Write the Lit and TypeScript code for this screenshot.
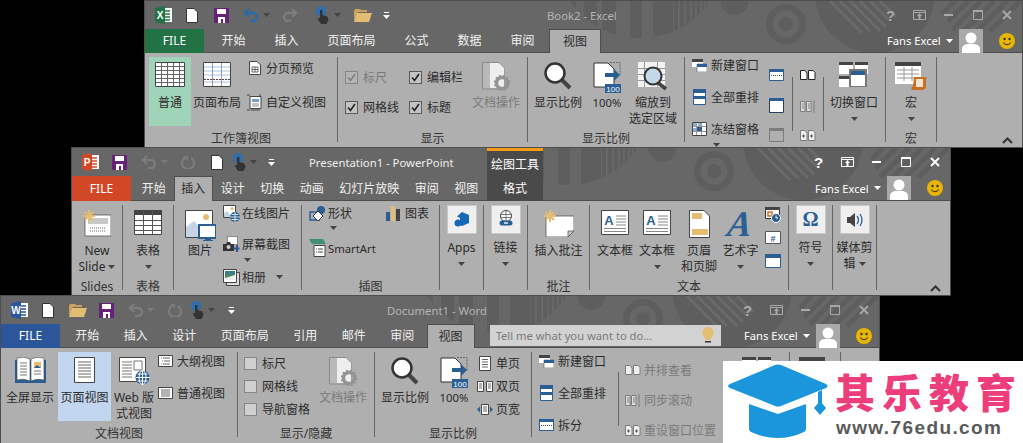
import { LitElement, html, svg, css, TemplateResult } from 'lit';
import { customElement } from 'lit/decorators.js';

type T = TemplateResult | unknown;
type Item = { x: number; w: number; t: T; cls?: string };

const ic = (w: number, h: number, body: T) =>
  html`<svg class="ic" width=${w} height=${h} viewBox="0 0 ${w} ${h}">${body}</svg>`;

// lay items out left to right; the gaps come from the x values in the data
const flow = (x0: number, items: Item[]) => {
  let p = x0;
  return items.map((it) => {
    const ml = it.x - p;
    p = it.x + it.w;
    return html`<div class="slot ${it.cls || ''}" style="margin-left:${ml}px;width:${it.w}px">${it.t}</div>`;
  });
};

const BLUE = '#2b5f94';
const TAN = '#e3bd72';
const DK = '#444';

/* quick access toolbar */
const logo = (bg: string, letter: string) => ic(18, 18, svg`
  <path d="M8 2h9v14H8z" fill="#fff"/>
  <path d="M10 5h5M10 8h5M10 11h5M10 14h5" stroke=${bg} stroke-width="1.4"/>
  <path d="M0 2l10-2v18L0 16z" fill=${bg}/>
  <text x="5" y="13" text-anchor="middle" font-family="Liberation Sans" font-weight="700" font-size="10" fill="#fff">${letter}</text>`);
const qDoc = ic(12, 15, svg`<path d="M.5.5H8L11.5 4v10.5H.5z" fill="#fff" stroke="#333"/>`);
const qSave = ic(15, 15, svg`<path d="M0 0h15v15H0z" fill="#68217a"/><path d="M3 1h9v5H3zM4 9h7v6H9v-4H7v4H4z" fill="#fff"/>`);
const arrow = (c: string, flip: boolean) => ic(16, 14, svg`
  <g transform=${flip ? 'translate(16 0) scale(-1 1)' : ''} fill="none" stroke=${c} stroke-width="2.4">
    <path d="M6 1L2 5l4 4"/><path d="M2 5h8a4 4 0 0 1 0 8H7"/></g>`);
const qRefresh = ic(14, 14, svg`<path d="M4 3a6 6 0 1 0 6 0" fill="none" stroke="#7c7c7c" stroke-width="2.2"/><path d="M2 1h5v5z" fill="#7c7c7c"/>`);
const qTouch = ic(13, 18, svg`
  <circle cx="5" cy="5" r="5" fill="#2f6fb0"/>
  <path d="M4 4h2.400v5l5 1.500L12.500 14l-2 4H5L1.500 12.500 4 12z" fill="#333"/>`);
const qFolder = ic(18, 14, svg`<path d="M0 3l1-2h5l1 1h6v2H4L0 13z" fill="#c9a35e"/><path d="M0 14l3-9h15l-3 9z" fill=${TAN}/>`);
const qMore = ic(7, 8, svg`<path d="M1 1h5v1H1z" fill="#fff"/><path d="M0 4h7L3.500 8z" fill="#fff"/>`);
const caret = (c = '#444') => html`<svg class="ic" width="7" height="4" viewBox="0 0 7 4"><path d="M0 0h7L3.500 4z" fill=${c}/></svg>`;

/* window controls */
const ctlOpts = (c: string) => ic(13, 10, svg`<path d="M.5.5h12v9H.5zM.5 2.500h12" fill="none" stroke=${c}/><path d="M6.500 3l2.500 3H7.500v3h-2V6H4z" fill=${c}/>`);
const ctlMin = (c: string) => ic(9, 2, svg`<path d="M0 0h9v2H0z" fill=${c}/>`);
const ctlMax = (c: string) => ic(10, 10, svg`<path d="M.5.5h9v9h-9z" fill="none" stroke=${c}/><path d="M0 0h10v2H0z" fill=${c}/>`);
const ctlX = (c: string) => ic(10, 10, svg`<path d="M1 1l8 8M9 1l-8 8" stroke=${c} stroke-width="2"/>`);

const avatar = ic(24, 24, svg`<path d="M0 0h24v24H0z" fill="#a9a9a9"/><circle cx="12" cy="9" r="5.500" fill="#fff"/><path d="M3 24v-4q0-4 5-5h8q5 1 5 5v4z" fill="#fff"/>`);
const smiley = ic(16, 16, svg`<circle cx="8" cy="8" r="8" fill="#e8b600"/><circle cx="5.500" cy="6" r="1.200" fill="#333"/><circle cx="10.500" cy="6" r="1.200" fill="#333"/><path d="M4 9.500q4 4.500 8 0" fill="none" stroke="#333"/>`);

/* ribbon icons */
const gridLines = (xs: number[], ys: number[], w: number, h: number, c: string) => svg`
  ${xs.map((x) => svg`<path d="M${x} 0V${h}" stroke=${c}/>`)}
  ${ys.map((y) => svg`<path d="M0 ${y}H${w}" stroke=${c}/>`)}`;
const iNormal = ic(30, 25, svg`
  <path d="M0 0h30v25H0z" fill="#fff"/>
  ${gridLines([6.5, 12.5, 18.5, 24.5], [4.5, 8.5, 12.5, 16.5, 20.5], 30, 25, '#666')}
  <path d="M.5.5h29v24H.5z" fill="none" stroke=${DK}/>`);
const iLayout = ic(28, 25, svg`
  <path d="M0 0h28v25H0z" fill="#fff"/>
  <path d="M1 5h26M1 9h26M1 13h26M1 20h26" stroke="#c6d8ee" stroke-width="1.400"/>
  <path d="M9.500 1v23M18.500 1v23" stroke="#99a" />
  <path d="M1 17.500h26" stroke="#444" stroke-dasharray="2 1"/>
  <path d="M.5.5h27v24H.5z" fill="none" stroke=${DK}/>`);
const iBreak = ic(12, 14, svg`<path d="M.5.500H8L11.500 4v9.500H.5z" fill="#fff" stroke="#444"/><path d="M3 6h6v5H3zM6 6v5M3 8.500h6" fill="none" stroke="#666"/>`);
const iCustom = ic(16, 17, svg`<path d="M3 2.500h11v12H3z" fill="#fff" stroke="#444"/><path d="M0 1h3M0 16h3M13 0v2M4 16h9" stroke="#444"/><path d="M5 5h7v3H5z" fill="#7aa0c8"/><path d="M5 10h7M5 12h7" stroke="#888"/>`);
const iDocOp = ic(28, 29, svg`
  <path d="M.5.500H17L22 6v21H.5z" fill="#b9b9b9" stroke="#8a8a8a"/><path d="M8 1h9l5 5v20H8z" fill="#eee"/>
  <circle cx="20" cy="21" r="5.500" fill="none" stroke="#949494" stroke-width="3.500"/><circle cx="20" cy="21" r="7.500" fill="none" stroke="#949494" stroke-width="1.500" stroke-dasharray="2 2"/>`);
const iMag = ic(28, 28, svg`<path d="M17 17l9 9" stroke="#444" stroke-width="4"/><circle cx="11" cy="11" r="9.500" fill="#fff" stroke="#333" stroke-width="2.500"/>`);
const i100 = ic(28, 31, svg`
  <path d="M1 1h14l6 6v18H1z" fill="#fff" stroke="#333"/>
  <path d="M17 .5h10v14" fill="none" stroke="#666" stroke-dasharray="2 1"/>
  <path d="M12 11h9V7l6 6-6 6v-4h-9z" fill=${BLUE}/>
  <path d="M12 22h16v9H12z" fill=${BLUE}/>
  <text x="20" y="30" text-anchor="middle" font-family="Liberation Sans" font-size="8" fill="#fff">100</text>`);
const iZoomSel = ic(30, 29, svg`
  <path d="M0 0h27v25H0z" fill="#f2f2f2"/>
  ${gridLines([6.5, 19.5], [6.5, 12.5, 18.5], 27, 25, '#999')}
  <path d="M19 20l9 7" stroke="#444" stroke-width="3.500"/>
  <circle cx="15" cy="14" r="8.500" fill="#c4d8ec" stroke="#333" stroke-width="2"/>`);
const iNewWin = ic(15, 13, svg`<path d="M0 2h11v6H0z" fill="#fff"/><path d="M0 0h11v3H0z" fill=${DK}/><path d="M5 5h10v8H5z" fill="#fff" stroke="#444" stroke-width=".5"/><path d="M5 5h10v3H5z" fill=${BLUE}/>`);
const iArrange = ic(13, 16, svg`<path d="M.5.500h12v15H.5z" fill="#fff" stroke=${BLUE}/><path d="M0 0h13v4H0zM0 7h13v3H0z" fill=${BLUE}/>`);
const iFreeze = ic(15, 14, svg`<path d="M0 0h15v14H0z" fill="#fff"/>${gridLines([4.5, 9.5], [4.5, 9.5], 15, 14, '#999')}<path d="M.5.500h14v13H.5z" fill="none" stroke=${DK}/><path d="M5 5h5v4H5z" fill=${BLUE}/><path d="M1 1h3v3H1zM6 1h3v3H6zM1 6h3v3H1z" fill="#8fb0d4"/>`);
const iSplit = ic(15, 12, svg`<path d="M.5.500h14v11H.5z" fill="#fff" stroke=${BLUE}/><path d="M0 0h15v3H0z" fill=${BLUE}/><path d="M2 6.500h11" stroke="#444" stroke-dasharray="1 1"/>`);
const iHide = ic(15, 15, svg`<path d="M.5.500h14v14H.5z" fill="#fff" stroke=${BLUE}/><path d="M0 0h15v3H0z" fill=${BLUE}/><path d="M.5 14.500h14M.5 3v12M14.500 3v12" stroke="#222" stroke-dasharray="1 1"/>`);
const iUnhide = ic(15, 14, svg`<path d="M.5.500h14v13H.5z" fill="none" stroke="#7c7c7c"/><path d="M0 0h15v3H0z" fill="#7c7c7c"/>`);
const iPages = ic(16, 10, svg`<path d="M.5.500H5L7 3v6.500H.5zM8.500.500H13l2 2v7H8.500z" fill="#fff" stroke="#222"/>`);
const iPagesDim = ic(16, 10, svg`<path d="M.5.500H5L7 3v6.500H.5zM8.500.500H13l2 2v7H8.500z" fill="#eee" stroke="#7c7c7c"/>`);
const iSync = ic(16, 15, svg`<path d="M.5 2.500H5v10H.5zM6.500 2.500H11v10H6.500z" fill="#ddd" stroke="#7c7c7c"/><path d="M2 5h2M2 7h2M2 9h2M8 5h2M8 7h2M8 9h2" stroke="#7c7c7c"/><path d="M14 1v13" stroke="#7c7c7c"/>`);
const iReset = ic(16, 11, svg`<path d="M.5.500H5L7 3v7.500H.5zM8.500.500H13l2 2v8H8.500z" fill="#eee" stroke="#7c7c7c"/><path d="M2 6h3M3.500 4.500v3M10 6h3M11.500 4.500v3" stroke="#555"/>`);
const iSwitch = ic(30, 25, svg`
  <path d="M0 0h14v12H0zM16 0h13v12H16zM0 14h12v11H0z" fill="#fff"/>
  <path d="M0 0h14v3H0zM16 0h13v3H16zM0 14h12v3H0z" fill=${DK}/>
  <path d="M11 8h16v17H11z" fill="#fff" stroke="#777" stroke-width="2"/><path d="M12 9h14v4H12z" fill=${BLUE}/>`);
const iMacro = ic(32, 28, svg`
  <path d="M0 0h26v22H0z" fill="#fff"/><path d="M0 0h26v4H0z" fill=${DK}/>
  <path d="M2 8h22M2 12h22M2 16h22M9 5v14M17 5v14" stroke="#999"/>
  <path d="M19 15h13l-1 2v8q-1 3-3 3H16l1-2h-1l2-2z" fill="#c96f22"/><path d="M21 17h7v8h-7z" fill="#f4e3d0"/>`);

const iNewSlide = ic(28, 27, svg`
  <path d="M2 5h26v21H2z" fill="#fff" stroke="#555" stroke-width=".8"/>
  <path d="M5 8h20v6H5z" fill="#c8c8c8"/><path d="M7 18h16M7 21h16" stroke="#666" stroke-dasharray="1 1"/>
  <path d="M6 0v12M0 6h12M2 2l8 8M10 2l-8 8" stroke=${TAN} stroke-width="2"/>`);
const iTable = ic(28, 25, svg`
  <path d="M0 0h28v25H0z" fill="#fff"/><path d="M0 0h28v5H0z" fill=${DK}/>
  ${gridLines([9.5, 18.5], [10.5, 15.5, 20.5], 28, 25, '#555')}
  <path d="M.5.500h27v24H.5z" fill="none" stroke=${DK}/>`);
const iPicture = ic(31, 31, svg`
  <path d="M.5.500h27v27H.5z" fill="#fff" stroke="#444"/>
  <path d="M1 27V17l8-6 14 16z" fill="#c4d5e8"/><circle cx="21" cy="7" r="3" fill=${TAN}/>
  <path d="M14 15h17v13H14z" fill="#fff" stroke=${BLUE} stroke-width="2"/><path d="M20 29h6v1h2v1h-10v-1h2z" fill=${BLUE}/>`);
const iOnline = ic(17, 17, svg`<path d="M.5.500h12v12H.5z" fill="#fff" stroke="#444"/><path d="M1 12V8l3-2 5 6z" fill="#c4d5e8"/><circle cx="9" cy="3.500" r="1.500" fill=${TAN}/><circle cx="12" cy="12" r="5" fill=${BLUE}/><path d="M7 12h10M12 7v10M8.500 9.500h7M8.500 14.500h7" stroke="#fff" stroke-width=".8"/>`);
const iShot = ic(17, 16, svg`<path d="M4.500 .5h10v8h-10z" fill="#fff" stroke="#444" stroke-dasharray="1 1"/><path d="M0 8h3l1-2h3l1 2h3v7H0z" fill="#333"/><circle cx="5.500" cy="11" r="2" fill="#ccc"/><path d="M14 9v7M10.500 12.500h6" stroke=${BLUE} stroke-width="2.200"/>`);
const iAlbum = ic(17, 17, svg`<path d="M3.500 3.500h13v13h-13z" fill="#ddd" stroke="#444"/><path d="M.5.500h13v13H.5z" fill="#fff" stroke="#444"/><path d="M2 2h10v4H2z" fill="#3a7a90"/><path d="M2 6l4-2 6 3v4H2z" fill="#4a8a5a"/><path d="M2 9l10-3v5H2z" fill="#eee"/>`);
const iShape = ic(17, 16, svg`<path d="M1 7h9v8H1z" fill="none" stroke=${BLUE} stroke-width="1.500"/><circle cx="12" cy="5" r="4" fill=${BLUE}/><path d="M9 6l5 5-5 5-5-5z" fill="#fff" stroke="#333"/>`);
const iChart = ic(14, 15, svg`<path d="M0 6h4v9H0z" fill=${BLUE}/><path d="M5 0h4v15H5z" fill=${TAN}/><path d="M10 3h4v12h-4z" fill=${DK}/>`);
const iSmart = ic(17, 19, svg`<path d="M0 0h14l3 5H3z" fill="#3e8e78"/><path d="M5 6.500h11v11H5z" fill="#fff" stroke="#444"/><path d="M7 10h1M9 10h5M7 13h1M9 13h5" stroke="#444"/>`);
const iApps = ic(16, 16, svg`<path d="M8 0l7 3v8l-7 3-2-1V6L3 4.500z" fill="#1668b9"/><circle cx="4" cy="11" r="3.500" fill="#1668b9"/>`);
const iLink = ic(16, 19, svg`<circle cx="8" cy="6" r="5.500" fill="#fff" stroke="#444"/><path d="M3 4.500h10M3 7.500h10M8 .5v11" stroke="#444" stroke-width=".7"/><path d="M4 13h8" stroke=${BLUE} stroke-width="5" stroke-linecap="round"/><path d="M6 13h4" stroke="#eee" stroke-width="1.500"/>`);
const iComment = ic(30, 27, svg`
  <path d="M2 6h28v15l-6 6H2z" fill="#fff" stroke="#555" stroke-width=".8"/><path d="M24 27v-6h6z" fill="#c8c8c8" stroke="#555" stroke-width=".8"/>
  <path d="M6 0v12M0 6h12M2 2l8 8M10 2l-8 8" stroke=${TAN} stroke-width="2"/>`);
const iTextBox = ic(28, 25, svg`
  <path d="M.5.500h27v24H.5z" fill="#fff" stroke=${DK}/>
  <text x="8" y="15" text-anchor="middle" font-family="Liberation Sans" font-weight="700" font-size="13" fill=${BLUE}>A</text>
  <path d="M15 6h10M15 9h10M15 12h10M15 15h10M3 18.500h22M3 21.500h22" stroke="#888"/>`);
const iHeader = ic(21, 28, svg`<path d="M.5.500H15L20.500 6v21.500H.5z" fill="#fff" stroke=${DK}/><path d="M3 3h10v6H3z" fill=${TAN}/><path d="M3 19h16v6H3z" fill=${TAN}/>`);
const iWordArt = html`<span class="wordart">A</span>`;
const iDate = ic(16, 16, svg`<path d="M.5.500h14v11H.5z" fill="#fff" stroke="#333"/><path d="M0 0h15v3H0z" fill=${DK}/><path d="M3 5h4v4H3z" fill="none" stroke="#c96f22" stroke-width="1.500"/><circle cx="11" cy="11" r="4.500" fill=${BLUE} stroke="#fff" /><path d="M11 8.500V11h2" stroke="#fff" fill="none"/>`);
const iNumber = ic(16, 13, svg`<path d="M.5.500h15v12H.5z" fill="#fff" stroke="#555"/><text x="8" y="11" text-anchor="middle" font-family="Liberation Sans" font-weight="700" font-size="9" fill=${BLUE}>#</text>`);
const iObject = ic(16, 14, svg`<path d="M.5.500h15v13H.5z" fill="#fff" stroke=${BLUE}/><path d="M0 0h16v4H0z" fill=${BLUE}/>`);
const iOmega = html`<span class="omega">Ω</span>`;
const iSound = ic(16, 14, svg`<path d="M0 4h3l5-4v14l-5-4H0z" fill=${DK}/><path d="M10 3q3 4 0 8M13 1q4 6 0 12" fill="none" stroke=${BLUE} stroke-width="1.300"/>`);

const iBook = ic(31, 26, svg`
  <path d="M0 3h31v23H0z" fill=${BLUE}/>
  <path d="M2 1q7-2 13 1v22q-6-3-13-1zM29 1q-7-2-13 1v22q6-3 13-1z" fill="#fff" stroke="#444" stroke-width=".6"/>
  <path d="M5 6h7M5 9h7M5 12h7M5 15h7M5 18h7M19 14h7M19 17h7" stroke="#777"/>
  <path d="M19 5h7v6h-7z" fill=${TAN}/><path d="M19 11l3-3 4 3z" fill=${BLUE}/>`);
const iPageDoc = ic(21, 26, svg`<path d="M.5.500h20v25H.5z" fill="#fff" stroke=${DK}/><path d="M4 5h13M4 8h13M4 11h13M4 14h13M4 17h13M4 20h13" stroke="#666"/>`);
const iWeb = ic(31, 28, svg`
  <path d="M.5.500h26v24H.5z" fill="#fff" stroke=${DK}/>
  <path d="M3 5h10M3 8h10M3 11h10M3 14h10M3 17h10M3 20h10" stroke="#777"/><path d="M15 4h8v9h-8z" fill="#fff" stroke="#777"/>
  <circle cx="23.500" cy="20.500" r="7" fill=${BLUE}/><path d="M17 20.500h14M23.500 14v14M18.500 17h10M18.500 24h10" stroke="#fff"/><ellipse cx="23.500" cy="20.500" rx="3.500" ry="7" fill="none" stroke="#fff"/>`);
const iOutline = ic(15, 12, svg`<path d="M.5.500h14v11H.5z" fill="#fff" stroke=${DK}/><path d="M3 3h1M5 3h7M4 6h1M6 6h6M3 9h1M5 9h7" stroke="#666"/>`);
const iDraft = ic(15, 12, svg`<path d="M.5.500h14v11H.5z" fill="#fff" stroke=${DK}/><path d="M3 3h9M3 5h9M3 7h9M3 9h9" stroke="#666"/>`);
const iOnePage = ic(12, 15, svg`<path d="M.5.500h11v14H.5z" fill="#fff" stroke=${DK}/><path d="M3 3.500h6M3 6h6M3 8.500h6M3 11h6" stroke="#666"/>`);
const iTwoPage = ic(16, 11, svg`<path d="M.5.500h6v10h-6zM9.500.500h6v10h-6z" fill="#fff" stroke=${DK}/><path d="M2 3h3M2 5h3M2 7h3M11 3h3M11 5h3M11 7h3" stroke="#666"/>`);
const iPageW = ic(16, 11, svg`<path d="M4.500.500h7v10h-7z" fill="#fff" stroke=${DK}/><path d="M6 3h4M6 5h4M6 7h4" stroke="#666"/><path d="M0 5.500l3-3v6zM16 5.500l-3-3v6z" fill=${BLUE}/>`);

/* ribbon pieces */
const lbl = (s: string) => {
  const inline = s.endsWith('▾');
  return html`<div class="txt ${s === '100%' ? 'lat' : ''}">${inline ? s.slice(0, -1) : s}${inline ? html`<span class="icar">${caret()}</span>` : ''}</div>`;
};
const big = (i: T, lines: string[], o: { caret?: boolean; hl?: string; dis?: boolean } = {}) =>
  html`<div class="big ${o.hl || ''} ${o.dis ? 'dis' : ''}">
    <div class="iarea">${i}</div>
    ${lines.map(lbl)}
    ${o.caret ? html`<div class="car">${caret()}</div>` : ''}
  </div>`;
const boxed = (i: T, lines: string[], hasCaret = true) =>
  html`<div class="big">
    <div class="btnbox">${i}</div>
    ${lines.map(lbl)}
    ${hasCaret ? html`<div class="car">${caret()}</div>` : ''}
  </div>`;

type Row = { y: number; i?: T; t?: string; dis?: boolean; car?: number; after?: number };
const col = (top: number, iw: number, gap: number, rows: Row[]) => {
  let p = top;
  return html`<div class="col">
    ${rows.map((r) => {
      const mt = r.y - 8 - p;
      p = r.y + 8;
      return html`<div class="row ${r.dis ? 'dis' : ''}" style="margin-top:${mt}px">
        ${r.car !== undefined
          ? html`<span class="rcar" style="margin-left:${r.car}px">${caret()}</span>`
          : html`<span class="rico" style="width:${iw}px">${r.i}</span>`}
        ${r.t ? html`<span class="rtxt ${/^[A-Za-z]/.test(r.t) ? 'lat' : ''}" style="margin-left:${gap}px">${r.t}</span>` : ''}
        ${r.after !== undefined ? html`<span class="rcar" style="margin-left:${r.after}px">${caret()}</span>` : ''}
      </div>`;
    })}
  </div>`;
};
const chk = (on: boolean, dis = false) =>
  html`<span class="cb ${dis ? 'off' : ''} ${on ? '' : 'empty'}">${on
    ? html`<svg width="11" height="11" viewBox="0 0 11 11"><path d="M2 5.500l2.500 3L9 2" fill="none" stroke=${dis ? '#808080' : '#222'} stroke-width="1.600"/></svg>`
    : ''}</span>`;
const vsep = (top: number, y0: number, y1: number) =>
  html`<div class="vsep" style="margin-top:${y0 - top}px;height:${y1 - y0}px"></div>`;

const group = (x0: number, x1: number, label: string, items: Item[]) =>
  html`<div class="group" style="width:${x1 - x0}px">
    <div class="gbody">${flow(x0, items)}</div>
    <div class="glabel">${label}</div>
  </div>`;

const chevron = html`<div class="collapse">
  <svg width="11" height="7" viewBox="0 0 11 7"><path d="M1 6l4.500-4.500L10 6" fill="none" stroke="#333" stroke-width="2"/></svg></div>`;

const pattern = html`<svg class="pattern" width="460" height="53" viewBox="562 0 460 53">
  <defs>
    <clipPath id="disk"><circle cx="640" cy="-48" r="85"/></clipPath>
    <clipPath id="bigd"><circle cx="875" cy="-8" r="60"/></clipPath>
    <clipPath id="rs"><path d="M935 0h90v32h-70z"/></clipPath>
  </defs>
  <g fill="#5e5e5e">
    <g clip-path="url(#disk)">
      <path d="M563 0h13v53h-13zM584 0h13v53h-13zM602 0h14v53h-14zM630 0h12v53h-12zM653 0h20v53h-20zM674 0h4v53h-4zM680 0h4v53h-4zM686 0h4v53h-4zM692 0h3v53h-3zM697 0h3v53h-3zM702 0h2v53h-2zM706 0h2v53h-2z"/>
    </g>
    <circle cx="734.500" cy="0" r="14"/>
    <path fill-rule="evenodd" d="M766 23a20 20 0 1 0 40 0a20 20 0 1 0-40 0zM772.500 23a13.500 13.500 0 1 1 27 0a13.500 13.500 0 1 1-27 0z"/>
    <circle cx="786" cy="23" r="7"/>
    <circle cx="875" cy="-8" r="60"/>
  </g>
  <g clip-path="url(#bigd)" stroke="#6a6a6a" stroke-width="3">
    <path d="M830 0l32 32M840 0l30 30M850 0l30 30M860 0l26 26M870 0l20 20M880 0l16 16"/>
  </g>
  <g clip-path="url(#rs)" stroke="#5e5e5e" stroke-width="5">
    <path d="M955 0l-30 30M968 0l-30 30M981 0l-30 30M994 0l-30 30M1007 0l-30 30M1020 0l-30 30"/>
  </g>
</svg>`;

const help = (c: string) => html`<span class="help" style="color:${c}">?</span>`;

// title bar built from absolute x values, R is the right edge of the window
const titleBar = (left: number, R: number, c: string, qat: Item[], title: Item, extra: Item[] = []) =>
  html`<div class="bar">${flow(left + 1, [
    ...qat,
    title,
    ...extra,
    { x: R - 136, w: 8, t: help(c) },
    { x: R - 109, w: 13, t: ctlOpts(c) },
    { x: R - 78, w: 9, t: ctlMin(c) },
    { x: R - 49, w: 10, t: ctlMax(c) },
    { x: R - 20, w: 10, t: ctlX(c) },
  ])}</div>`;

const user = html`<div class="user">
  <span class="uname">Fans Excel</span>
  <span class="ucar">${caret('#fff')}</span>
  ${avatar}
  <span class="usmile">${smiley}</span>
</div>`;

const tabs = (file: string, names: string[], active: string) => html`
  <div class="tab-file ${file}">FILE</div>
  ${names.map((n) => html`<div class="tab ${n === active ? 'on' : ''}">${n}</div>`)}`;

const titleTxt = (s: string) => html`<span class="title">${s}</span>`;
const grey = '#7c7c7c';

const excel = () => html`<div class="win excel">
  ${pattern}
  ${titleBar(144, 1022, '#a8a8a8', [
    { x: 155, w: 18, t: logo('#217346', 'X') },
    { x: 186, w: 12, t: qDoc },
    { x: 214, w: 15, t: qSave },
    { x: 243, w: 16, t: arrow('#2b6aa8', false) },
    { x: 263, w: 7, t: caret('#444') },
    { x: 282, w: 16, t: arrow(grey, true) },
    { x: 316, w: 13, t: qTouch },
    { x: 334, w: 7, t: caret('#444') },
    { x: 354, w: 18, t: qFolder },
    { x: 383, w: 7, t: qMore },
  ], { x: 547, w: 72, t: titleTxt('Book2 - Excel'), cls: 'dim' })}
  <div class="tabs">
    ${tabs('fx', ['开始', '插入', '页面布局', '公式', '数据', '审阅', '视图'], '视图')}
    ${user}
  </div>
  <div class="ribbon">
    ${group(145, 337, '工作簿视图', [
      { x: 149, w: 42, t: big(iNormal, ['普通'], { hl: 'hlg' }) },
      { x: 192, w: 50, t: big(iLayout, ['页面布局']) },
      { x: 246, w: 88, t: col(57, 17, 3, [
        { y: 68, i: iBreak, t: '分页预览' },
        { y: 102, i: iCustom, t: '自定义视图' },
      ]) },
    ])}
    ${group(338, 527, '显示', [
      { x: 345, w: 56, t: col(57, 13, 5, [
        { y: 77, i: chk(true, true), t: '标尺', dis: true },
        { y: 107, i: chk(true), t: '网格线' },
      ]) },
      { x: 409, w: 56, t: col(57, 13, 5, [
        { y: 77, i: chk(true), t: '编辑栏' },
        { y: 107, i: chk(true), t: '标题' },
      ]) },
      { x: 472, w: 48, t: big(iDocOp, ['文档操作'], { dis: true }) },
    ])}
    ${group(528, 684, '显示比例', [
      { x: 534, w: 48, t: big(iMag, ['显示比例']) },
      { x: 591, w: 32, t: big(i100, ['100%']) },
      { x: 629, w: 48, t: big(iZoomSel, ['缩放到', '选定区域']) },
    ])}
    ${group(685, 885, '', [
      { x: 692, w: 72, t: col(57, 15, 4, [
        { y: 65, i: iNewWin, t: '新建窗口' },
        { y: 97, i: iArrange, t: '全部重排' },
        { y: 129, i: iFreeze, t: '冻结窗格' },
        { y: 145, car: 21 },
      ]) },
      { x: 769, w: 16, t: col(57, 15, 0, [{ y: 75, i: iSplit }, { y: 105, i: iHide }, { y: 135, i: iUnhide }]) },
      { x: 792, w: 1, t: vsep(57, 77, 131) },
      { x: 800, w: 16, t: col(57, 16, 0, [{ y: 75, i: iPages }, { y: 106, i: iSync }, { y: 135, i: iReset }]) },
      { x: 823, w: 1, t: vsep(57, 77, 131) },
      { x: 830, w: 48, t: big(iSwitch, ['切换窗口'], { caret: true }) },
    ])}
    ${group(886, 936, '宏', [{ x: 886, w: 50, t: big(iMacro, ['宏'], { caret: true }) }])}
    ${chevron}
  </div>
</div>`;

const ppt = () => html`<div class="win ppt">
  ${pattern}
  ${titleBar(71, 950, '#fff', [
    { x: 82, w: 18, t: logo('#d24726', 'P') },
    { x: 112, w: 15, t: qSave },
    { x: 141, w: 16, t: arrow(grey, false) },
    { x: 161, w: 7, t: caret(grey) },
    { x: 181, w: 14, t: qRefresh },
    { x: 211, w: 12, t: qDoc },
    { x: 233, w: 13, t: qTouch },
    { x: 250, w: 7, t: caret('#444') },
    { x: 268, w: 7, t: qMore },
  ], { x: 309, w: 146, t: titleTxt('Presentation1 - PowerPoint'), cls: 'bright' }, [
    { x: 487, w: 56, t: html`绘图工具`, cls: 'ctx' },
  ])}
  <div class="tabs">
    ${tabs('fp', ['开始', '插入', '设计', '切换', '动画', '幻灯片放映', '审阅', '视图'], '插入')}
    <div class="tab-ctx">格式</div>
    ${user}
  </div>
  <div class="ribbon">
    ${group(72, 122, 'Slides', [{ x: 72, w: 50, t: big(iNewSlide, ['New', 'Slide▾']) }])}
    ${group(123, 173, '表格', [{ x: 123, w: 50, t: big(iTable, ['表格'], { caret: true }) }])}
    ${group(174, 301, '', [
      { x: 183, w: 34, t: big(iPicture, ['图片']) },
      { x: 223, w: 75, t: col(205, 17, 2, [
        { y: 213, i: iOnline, t: '在线图片' },
        { y: 244, i: iShot, t: '屏幕截图' },
        { y: 260, car: 21 },
        { y: 277, i: iAlbum, t: '相册', after: 10 },
      ]) },
    ])}
    ${group(302, 439, '插图', [
      { x: 309, w: 70, t: col(205, 17, 2, [
        { y: 213, i: iShape, t: '形状' },
        { y: 228, car: 21 },
        { y: 248, i: iSmart, t: 'SmartArt' },
      ]) },
      { x: 386, w: 48, t: col(205, 14, 5, [{ y: 213, i: iChart, t: '图表' }]) },
    ])}
    ${group(440, 483, '', [{ x: 440, w: 43, t: boxed(iApps, ['Apps']) }])}
    ${group(484, 527, '', [{ x: 484, w: 43, t: boxed(iLink, ['链接']) }])}
    ${group(528, 589, '批注', [{ x: 528, w: 61, t: big(iComment, ['插入批注']) }])}
    ${group(590, 788, '文本', [
      { x: 597, w: 36, t: big(iTextBox, ['文本框']) },
      { x: 639, w: 36, t: big(iTextBox, ['文本框'], { caret: true }) },
      { x: 680, w: 38, t: big(iHeader, ['页眉', '和页脚']) },
      { x: 722, w: 37, t: big(iWordArt, ['艺术字'], { caret: true }) },
      { x: 765, w: 16, t: col(205, 16, 0, [{ y: 215, i: iDate }, { y: 237, i: iNumber }, { y: 261, i: iObject }]) },
    ])}
    ${group(789, 832, '', [{ x: 789, w: 43, t: boxed(iOmega, ['符号']) }])}
    ${group(833, 876, '', [{ x: 833, w: 43, t: boxed(iSound, ['媒体剪', '辑▾'], false) }])}
    ${chevron}
  </div>
</div>`;

const word = () => html`<div class="win word">
  ${pattern}
  ${titleBar(0, 879, '#a8a8a8', [
    { x: 11, w: 18, t: logo('#2b579a', 'W') },
    { x: 42, w: 12, t: qDoc },
    { x: 69, w: 18, t: qFolder },
    { x: 99, w: 15, t: qSave },
    { x: 128, w: 16, t: arrow(grey, false) },
    { x: 147, w: 7, t: caret(grey) },
    { x: 168, w: 14, t: qRefresh },
    { x: 191, w: 13, t: qTouch },
    { x: 208, w: 7, t: caret('#444') },
    { x: 228, w: 7, t: qMore },
  ], { x: 387, w: 100, t: titleTxt('Document1 - Word'), cls: 'dim' })}
  <div class="tabs">
    ${tabs('fw', ['开始', '插入', '设计', '页面布局', '引用', '邮件', '审阅', '视图'], '视图')}
    <div class="tell">
      <span>Tell me what you want to do...</span>
      <svg width="12" height="17" viewBox="0 0 12 17"><path d="M6 0a6 6 0 0 1 3 11v2H3v-2A6 6 0 0 1 6 0z" fill=${TAN}/><path d="M3 14h6v1.500H3z" fill="#333"/></svg>
    </div>
    ${user}
  </div>
  <div class="ribbon">
    ${group(1, 237, '文档视图', [
      { x: 5, w: 50, t: big(iBook, ['全屏显示']) },
      { x: 58, w: 53, t: big(iPageDoc, ['页面视图'], { hl: 'hlb' }) },
      { x: 113, w: 42, t: big(iWeb, ['Web 版', '式视图']) },
      { x: 158, w: 76, t: col(352, 15, 4, [
        { y: 361, i: iOutline, t: '大纲视图' },
        { y: 393, i: iDraft, t: '普通视图' },
      ]) },
    ])}
    ${group(238, 374, '显示/隐藏', [
      { x: 244, w: 70, t: col(352, 13, 5, [
        { y: 363, i: chk(false), t: '标尺' },
        { y: 386, i: chk(false), t: '网格线' },
        { y: 409, i: chk(false), t: '导航窗格' },
      ]) },
      { x: 319, w: 48, t: big(iDocOp, ['文档操作'], { dis: true }) },
    ])}
    ${group(375, 531, '显示比例', [
      { x: 381, w: 48, t: big(iMag, ['显示比例']) },
      { x: 438, w: 32, t: big(i100, ['100%']) },
      { x: 477, w: 46, t: col(352, 16, 3, [
        { y: 363, i: iOnePage, t: '单页' },
        { y: 386, i: iTwoPage, t: '双页' },
        { y: 409, i: iPageW, t: '页宽' },
      ]) },
    ])}
    ${group(532, 789, '', [
      { x: 539, w: 68, t: col(352, 15, 4, [
        { y: 361, i: iNewWin, t: '新建窗口' },
        { y: 393, i: iArrange, t: '全部重排' },
        { y: 425, i: iSplit, t: '拆分' },
      ]) },
      { x: 618, w: 1, t: vsep(352, 372, 426) },
      { x: 625, w: 92, t: col(352, 16, 3, [
        { y: 370, i: iPagesDim, t: '并排查看', dis: true },
        { y: 400, i: iSync, t: '同步滚动', dis: true },
        { y: 430, i: iReset, t: '重设窗口位置', dis: true },
      ]) },
      { x: 733, w: 48, t: big(iSwitch, []) },
    ])}
    ${group(790, 840, '', [{ x: 790, w: 50, t: big(iMacro, []) }])}
  </div>
</div>`;

const eduLogo = html`<div class="edu">
  <svg class="cap" width="104" height="76" viewBox="0 0 104 76">
    <path d="M22 40l29 10 28-10v25q0 2-2 3-26 12-53 0-2-1-2-3z" fill="#1b95dc"/>
    <path d="M3 24q-4-2 0-4L48 1q3-1 6 0l45 19q3 2 0 4L54 42q-3 1-6 0z" fill="#1b95dc"/>
    <path d="M91 28l4-2v14h-4z" fill="#1b95dc"/>
    <path d="M93 37l6 7-6 7-6-7z" fill="#1b95dc"/>
  </svg>
  <div class="edu-txt">
    <div class="edu-cn">其乐教育</div>
    <div class="edu-en">www.76edu.com</div>
  </div>
</div>`;

@customElement('app-root')
export class AppRoot extends LitElement {
  static styles = css`
    :host {
      display: block;
      position: relative;
      width: 1023px;
      height: 443px;
      background: #000;
      overflow: hidden;
      font-family: 'Noto Sans', 'Noto Sans CJK SC', sans-serif;
      font-size: 12px;
      color: #2b2b2b;
    }
    .ic { display: block; flex: none; }
    .win {
      position: absolute;
      background: #676767;
      border: 1px solid #4e4e4e;
      box-sizing: border-box;
      overflow: hidden;
    }
    .excel { left: 144px; top: 0; width: 879px; height: 148px; }
    .ppt { left: 71px; top: 147px; width: 880px; height: 149px; }
    .word { left: 0; top: 295px; width: 880px; height: 149px; }
    .pattern { position: absolute; right: 0; top: 0; }

    .bar { position: relative; display: flex; height: 28px; }
    .slot { flex: none; }
    .bar .slot { display: flex; align-items: center; white-space: nowrap; }
    .title { font-size: 11.300px; }
    .lat { font-size: 11.300px; }
    .dim { color: #b4b4b4; }
    .bright { color: #eee; }
    .ctx {
      background: #4a4a4a;
      border-top: 3px solid #f39c12;
      box-sizing: border-box;
      justify-content: center;
      color: #fff;
    }
    .help { font: 700 15px 'Liberation Sans', sans-serif; }

    .tabs {
      position: relative;
      display: flex;
      height: 24px;
      color: #f2f2f2;
      line-height: 24px;
      box-sizing: border-box;
      border-bottom: 1px solid #4e4e4e;
    }
    .ppt .tabs { height: 25px; line-height: 25px; }
    .tab-file {
      width: 59px;
      margin-right: 3px;
      text-align: center;
      color: #fff;
      height: 24px;
      font-size: 12px;
    }
    .ppt .tab-file { height: 25px; }
    .fx { background: #217346; }
    .fp { background: #d24726; }
    .fw { background: #2b579a; }
    .tab { white-space: nowrap; padding: 0 14.500px; }
    .ppt .tab { padding: 0 7.750px; }
    .word .tab { padding: 0 12.250px; }
    .tab.on {
      background: #afafaf;
      color: #2b2b2b;
      box-sizing: border-box;
      height: 24px;
      border: 1px solid #4e4e4e;
      border-bottom: none;
      line-height: 23px;
      padding: 0 13px;
    }
    .word .tab.on { padding: 0 11px; }
    .ppt .tab.on { height: 25px; padding: 0 6.750px; line-height: 24px; }
    .tab-ctx {
      margin-left: 1px;
      width: 56px;
      height: 25px;
      background: #4a4a4a;
      text-align: center;
      color: #fff;
    }
    .tell {
      display: flex;
      align-items: center;
      justify-content: space-between;
      margin-left: 15px;
      margin-top: 1px;
      width: 231px;
      height: 21px;
      padding: 0 7px 0 6px;
      box-sizing: border-box;
      background: #d2d2d2;
      color: #7a7a7a;
      font-size: 11.200px;
    }
    .user {
      margin-left: auto;
      margin-right: 7px;
      display: flex;
      align-items: center;
    }
    .uname { white-space: nowrap; width: 53px; color: #fff; font-size: 11.200px; }
    .ucar { margin: 0 6px 0 6px; }
    .usmile { margin-left: 16px; }

    .ribbon {
      display: flex;
      background: #afafaf;
      height: 94px;
      padding-top: 4px;
      box-sizing: border-box;
    }
    .word .ribbon { height: 96px; }
    .group {
      flex: none;
      height: 85px;
      box-sizing: content-box;
      border-right: 1px solid #666;
    }
    .gbody { display: flex; height: 74px; }
    .glabel { height: 11px; line-height: 15px; text-align: center; color: #333; white-space: nowrap; }
    .big {
      display: flex;
      flex-direction: column;
      align-items: center;
      height: 69px;
      line-height: 16px;
      white-space: nowrap;
    }
    .iarea {
      height: 38px;
      flex: none;
      display: flex;
      align-items: flex-start;
      justify-content: center;
      padding-top: 5px;
      box-sizing: border-box;
    }
    .btnbox {
      width: 30px;
      height: 29px;
      margin-bottom: 6px;
      flex: none;
      display: flex;
      align-items: center;
      justify-content: center;
      background: #efefef;
      border: 1px solid #c8c8c8;
      box-sizing: border-box;
    }
    .hlg { background: #a0d4b8; }
    .hlb { background: #c3d6f0; }
    .dis { color: #7a7a7a; }
    .txt { display: flex; align-items: center; }
    .icar { margin-left: 3px; }
    .car { height: 16px; display: flex; align-items: center; }
    .col { display: flex; flex-direction: column; }
    .row { display: flex; align-items: center; height: 16px; white-space: nowrap; flex: none; }
    .rico { display: flex; justify-content: center; flex: none; }
    .rcar { display: block; flex: none; }
    .cb {
      display: flex;
      align-items: center;
      justify-content: center;
      width: 13px;
      height: 13px;
      box-sizing: border-box;
      border: 1px solid #5a5a5a;
      background: #c4c4c4;
    }
    .cb.off { border-color: #868686; background: #b4b4b4; }
    .cb.empty { border-color: #868686; background: #cfcfcf; }
    .vsep { width: 1px; background: #666; }
    .collapse { margin-left: auto; margin-right: 9px; margin-top: 74px; }
    .wordart {
      font: italic 700 36px/28px 'Liberation Serif', serif;
      color: #2b5f94;
      transform: skewX(-8deg);
    }
    .omega { font: 700 20px 'Liberation Serif', serif; color: #2b5f94; }

    .edu {
      position: absolute;
      left: 723px;
      top: 361px;
      width: 300px;
      height: 82px;
      background: #fff;
      display: flex;
      align-items: flex-start;
    }
    .cap { margin: 3px 0 0 4px; flex: none; }
    .edu-txt { margin-left: 4px; }
    .edu-cn {
      font: 900 40px/42px 'Noto Sans CJK SC', sans-serif;
      color: #ee3d7b;
      letter-spacing: 7px;
      margin-top: 9px;
      white-space: nowrap;
    }
    .edu-en {
      font: 700 19px/22px 'Liberation Sans', sans-serif;
      color: #5a5a5a;
      letter-spacing: 1.400px;
      white-space: nowrap;
      margin-top: 5px;
      margin-left: 1px;
    }
  `;

  render() {
    return html`${excel()}${ppt()}${word()}${eduLogo}`;
  }
}
